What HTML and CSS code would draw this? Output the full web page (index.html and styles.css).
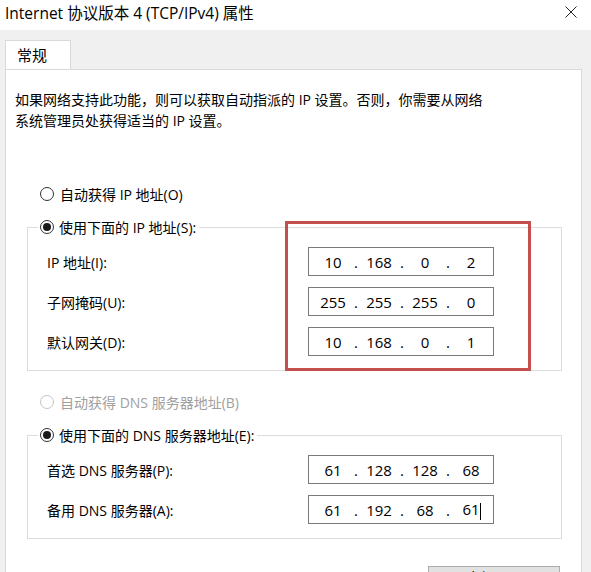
FILE: index.html
```html
<!DOCTYPE html>
<html>
<head>
    <title>Internet 协议版本 4 (TCP/IPv4) 属性</title>
    <link rel="stylesheet" href="styles.css">
</head>
<body>
    <div class="titlebar">
        <span class="title">Internet 协议版本 4 (TCP/IPv4) 属性</span>
        <svg class="close" width="12" height="12" viewBox="0 0 12 12">
            <path d="M0.5 0.5 L11.5 11.5 M11.5 0.5 L0.5 11.5" stroke="#222" stroke-width="1" fill="none"/>
        </svg>
    </div>

    <div class="tabs">
        <div class="tab">常规</div>
    </div>

    <div class="panel">
        <p class="desc">如果网络支持此功能，则可以获取自动指派的 IP 设置。否则，你需要从网络<br>系统管理员处获得适当的 IP 设置。</p>

        <div class="option first">
            <span class="radio"></span>
            <span>自动获得 IP 地址(O)</span>
        </div>

        <div class="group">
            <div class="legend">
                <span class="radio checked"></span>
                <span>使用下面的 IP 地址(S):</span>
            </div>
            <div class="rows">
                <label>IP 地址(I):</label>
                <div class="ip"><span>10</span><i>.</i><span>168</span><i>.</i><span>0</span><i>.</i><span>2</span></div>
                <label>子网掩码(U):</label>
                <div class="ip"><span>255</span><i>.</i><span>255</span><i>.</i><span>255</span><i>.</i><span>0</span></div>
                <label>默认网关(D):</label>
                <div class="ip"><span>10</span><i>.</i><span>168</span><i>.</i><span>0</span><i>.</i><span>1</span></div>
            </div>
        </div>

        <div class="option disabled">
            <span class="radio"></span>
            <span>自动获得 DNS 服务器地址(B)</span>
        </div>

        <div class="group dns">
            <div class="legend">
                <span class="radio checked"></span>
                <span>使用下面的 DNS 服务器地址(E):</span>
            </div>
            <div class="rows">
                <label>首选 DNS 服务器(P):</label>
                <div class="ip"><span>61</span><i>.</i><span>128</span><i>.</i><span>128</span><i>.</i><span>68</span></div>
                <label>备用 DNS 服务器(A):</label>
                <div class="ip"><span>61</span><i>.</i><span>192</span><i>.</i><span>68</span><i>.</i><span>61<b class="caret"></b></span></div>
            </div>
        </div>

        <div class="footer">
            <div class="check">
                <span class="box"></span>
                <span>退出时验证设置(L)</span>
            </div>
            <div class="button">高级(V)...</div>
        </div>

        <!-- red highlight drawn over the address fields -->
        <div class="highlight"></div>
    </div>
</body>
</html>
```

FILE: styles.css
```css
body {
    margin: 0;
    width: 591px;
    height: 572px;
    overflow: hidden;
    background-color: #f0f0f0;
    font-family: "Open Sans", "Noto Sans CJK SC", sans-serif;
    font-size: 14px;
    color: #000;
}

.titlebar {
    height: 30px;
    background-color: #fff;
    display: flex;
    justify-content: space-between;
    align-items: flex-start;
    padding: 0 14px 0 5px;
}

.title {
    line-height: 26px;
    font-size: 15.5px;
}

.close {
    margin-top: 6px;
}

.tabs {
    padding: 10px 0 0 5px;
    display: flex;
}

.tab {
    width: 66px;
    height: 30px;
    box-sizing: border-box;
    border: 1px solid #d9d9d9;
    border-bottom: none;
    background-color: #fff;
    margin-bottom: -1px;
    position: relative;
    padding-left: 11px;
    line-height: 29px;
    font-size: 15px;
}

.panel {
    margin-left: 5px;
    width: 577px;
    height: 520px;
    box-sizing: border-box;
    border: 1px solid #d9d9d9;
    background-color: #fff;
    position: relative;
}

.desc {
    margin: 0;
    padding: 19px 0 0 9px;
    line-height: 21px;
}

.option {
    display: flex;
    align-items: center;
    gap: 6px;
    height: 22px;
    margin-left: 34px;
}

.option.first {
    margin-top: 52px;
}

.option.disabled {
    margin-top: 20px;
    color: #a0a0a0;
}

.radio {
    width: 14px;
    height: 14px;
    box-sizing: border-box;
    border: 1px solid #333;
    border-radius: 50%;
    display: flex;
    align-items: center;
    justify-content: center;
}

.radio.checked::after {
    content: "";
    width: 8px;
    height: 8px;
    border-radius: 50%;
    background-color: #1a1a1a;
}

.disabled .radio {
    border-color: #c4c4c4;
}

.group {
    margin: 22px 19px 0 21px;
    border: 1px solid #dcdcdc;
    padding-bottom: 14px;
}

.group.dns {
    margin-top: 22px;
}

.legend {
    display: flex;
    align-items: center;
    gap: 5px;
    width: fit-content;
    height: 22px;
    margin: -12px 0 0 10px;
    padding: 0 3px 0 2px;
    background-color: #fff;
}

.rows {
    display: grid;
    grid-template-columns: 261px 186px;
    row-gap: 11px;
    align-items: center;
    margin-top: 9px;
    padding-left: 19px;
}

.ip {
    display: flex;
    align-items: center;
    width: 186px;
    height: 29px;
    box-sizing: border-box;
    border: 1px solid #7a7a7a;
    padding-left: 7px;
    font-size: 15px;
}

.ip span {
    width: 34px;
    text-align: center;
}

.ip i {
    width: 12px;
    text-align: center;
    font-style: normal;
}

.caret {
    display: inline-block;
    width: 1px;
    height: 17px;
    margin-right: -1px;
    background-color: #000;
    vertical-align: middle;
}

.footer {
    display: flex;
    justify-content: space-between;
    align-items: flex-start;
    margin-top: 27px;
    padding: 0 21px 0 41px;
}

.check {
    display: flex;
    align-items: center;
    gap: 6px;
    margin-top: 2px;
}

.box {
    width: 13px;
    height: 13px;
    box-sizing: border-box;
    border: 1px solid #333;
}

.button {
    width: 132px;
    height: 23px;
    box-sizing: border-box;
    border: 1px solid #adadad;
    background-color: #e1e1e1;
    text-align: center;
    line-height: 21px;
}

.highlight {
    position: absolute;
    left: 279px;
    top: 151px;
    width: 246px;
    height: 150px;
    box-sizing: border-box;
    border: 3px solid #c4504e;
}
```
